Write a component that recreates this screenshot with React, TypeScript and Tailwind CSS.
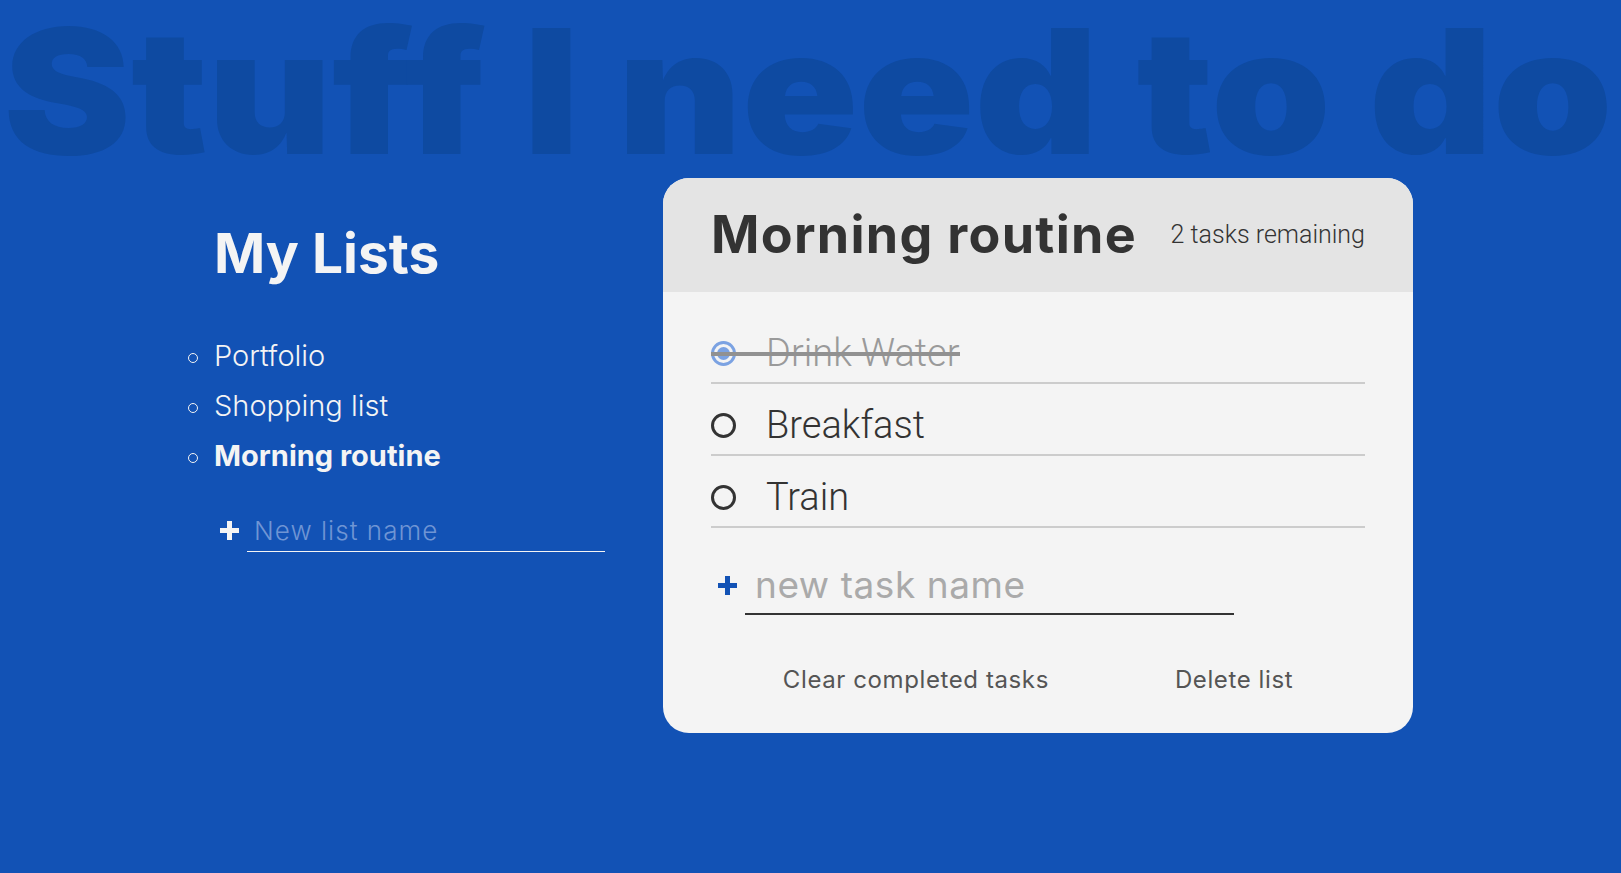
import { useState } from 'react';

type Task = { id: number; name: string; done: boolean };

const lists = [
  { id: 1, name: 'Portfolio' },
  { id: 2, name: 'Shopping list' },
  { id: 3, name: 'Morning routine' },
];

function PlusIcon({ className }: { className: string }) {
  return (
    <svg viewBox="0 0 19 19" className={className} fill="currentColor">
      <rect x="7" y="0" width="5" height="19" />
      <rect x="0" y="7" width="19" height="5" />
    </svg>
  );
}

export default function App() {
  const [tasks, setTasks] = useState<Task[]>([
    { id: 1, name: 'Drink Water', done: true },
    { id: 2, name: 'Breakfast', done: false },
    { id: 3, name: 'Train', done: false },
  ]);
  const activeId = 3;
  const remaining = tasks.filter((t) => !t.done).length;

  const toggle = (id: number) =>
    setTasks((ts) => ts.map((t) => (t.id === id ? { ...t, done: !t.done } : t)));

  return (
    <div className="min-h-screen bg-[#1252b5] font-['Inter',sans-serif] overflow-hidden">
      {/* Big background title */}
      <h1 className="mt-[5px] text-[173px] leading-none font-black text-[#0e4aa1] whitespace-nowrap pl-[3px] origin-left scale-x-[1.108]">
        Stuff I need to do
      </h1>

      <div className="flex">
        {/* Left: lists */}
        <div className="w-[663px] shrink-0 pl-[188px] pt-[48px]">
          <h2 className="ml-[26px] text-[55px] leading-none font-bold text-[#f4f4f4]">My Lists</h2>
          <ul className="mt-[50px]">
            {lists.map((l) => (
              <li key={l.id} className="flex items-center h-[50px] text-[29px] text-[#f4f4f4]">
                <span className="w-[10px] h-[10px] rounded-full border-[1.5px] border-[#f4f4f4] mr-[16px] mt-[3px]" />
                <span className={l.id === activeId ? 'font-bold' : 'font-light'}>{l.name}</span>
              </li>
            ))}
          </ul>
          <form className="mt-[28px] ml-[32px] flex items-center gap-[8px]" onSubmit={(e) => e.preventDefault()}>
            <PlusIcon className="w-[19px] h-[19px] text-[#f4f4f4]" />
            <input
              type="text"
              placeholder="New list name"
              className="w-[358px] h-[43px] bg-transparent border-b-[1.5px] border-[#f4f4f4] px-[7px] text-[26px] font-light tracking-[0.04em] text-[#f4f4f4] placeholder:text-[#6f95d4] outline-none"
            />
          </form>
        </div>

        {/* Right: todo card */}
        <div className="w-[750px] shrink-0 rounded-[26px] overflow-hidden bg-[#f4f4f4]">
          <div className="h-[114px] bg-[#e4e4e4] px-[48px] flex items-center justify-between">
            <h2 className="text-[52px] leading-none font-bold text-[#333333] tracking-[0.025em]">Morning routine</h2>
            <p className="font-['Roboto',sans-serif] font-light text-[25px] text-[#333333]">
              {remaining} tasks remaining
            </p>
          </div>

          <div className="px-[48px] pt-[20px] pb-[34px]">
            <ul>
              {tasks.map((t) => (
                <li key={t.id} className="h-[72px] pt-[12px] border-b-2 border-[#cccccc] flex items-center">
                  <label className="relative flex items-center cursor-pointer" onClick={() => toggle(t.id)}>
                    <span
                      className={`w-[25px] h-[25px] rounded-full border-[3px] flex items-center justify-center ${
                        t.done ? 'border-[#7ba2e2]' : 'border-[#333333]'
                      }`}
                    >
                      {t.done && <span className="w-[13px] h-[13px] rounded-full bg-[#7ba2e2]" />}
                    </span>
                    <span
                      className={`ml-[30px] font-['Roboto',sans-serif] font-light text-[38px] leading-none ${
                        t.done ? 'text-[#9a9a9a]' : 'text-[#333333]'
                      }`}
                    >
                      {t.name}
                    </span>
                    {t.done && (
                      <span className="absolute left-0 right-0 top-1/2 -mt-[1px] h-[4px] bg-[#919191]" />
                    )}
                  </label>
                </li>
              ))}
            </ul>

            <form className="mt-[28px] flex items-center gap-[8px] pl-[7px]" onSubmit={(e) => e.preventDefault()}>
              <PlusIcon className="w-[19px] h-[19px] text-[#1252b5]" />
              <input
                type="text"
                placeholder="new task name"
                className="w-[489px] h-[59px] bg-transparent border-b-2 border-[#333333] px-[10px] text-[37px] tracking-[0.015em] text-[#333333] placeholder:text-[#aaaaaa] outline-none"
              />
            </form>

            <div className="mt-[46px] h-[38px] flex items-center justify-center gap-[126px]">
              <button className="text-[24px] tracking-wide text-[#555555]">Clear completed tasks</button>
              <button className="text-[24px] tracking-wide text-[#555555]">Delete list</button>
            </div>
          </div>
        </div>
      </div>
    </div>
  );
}
